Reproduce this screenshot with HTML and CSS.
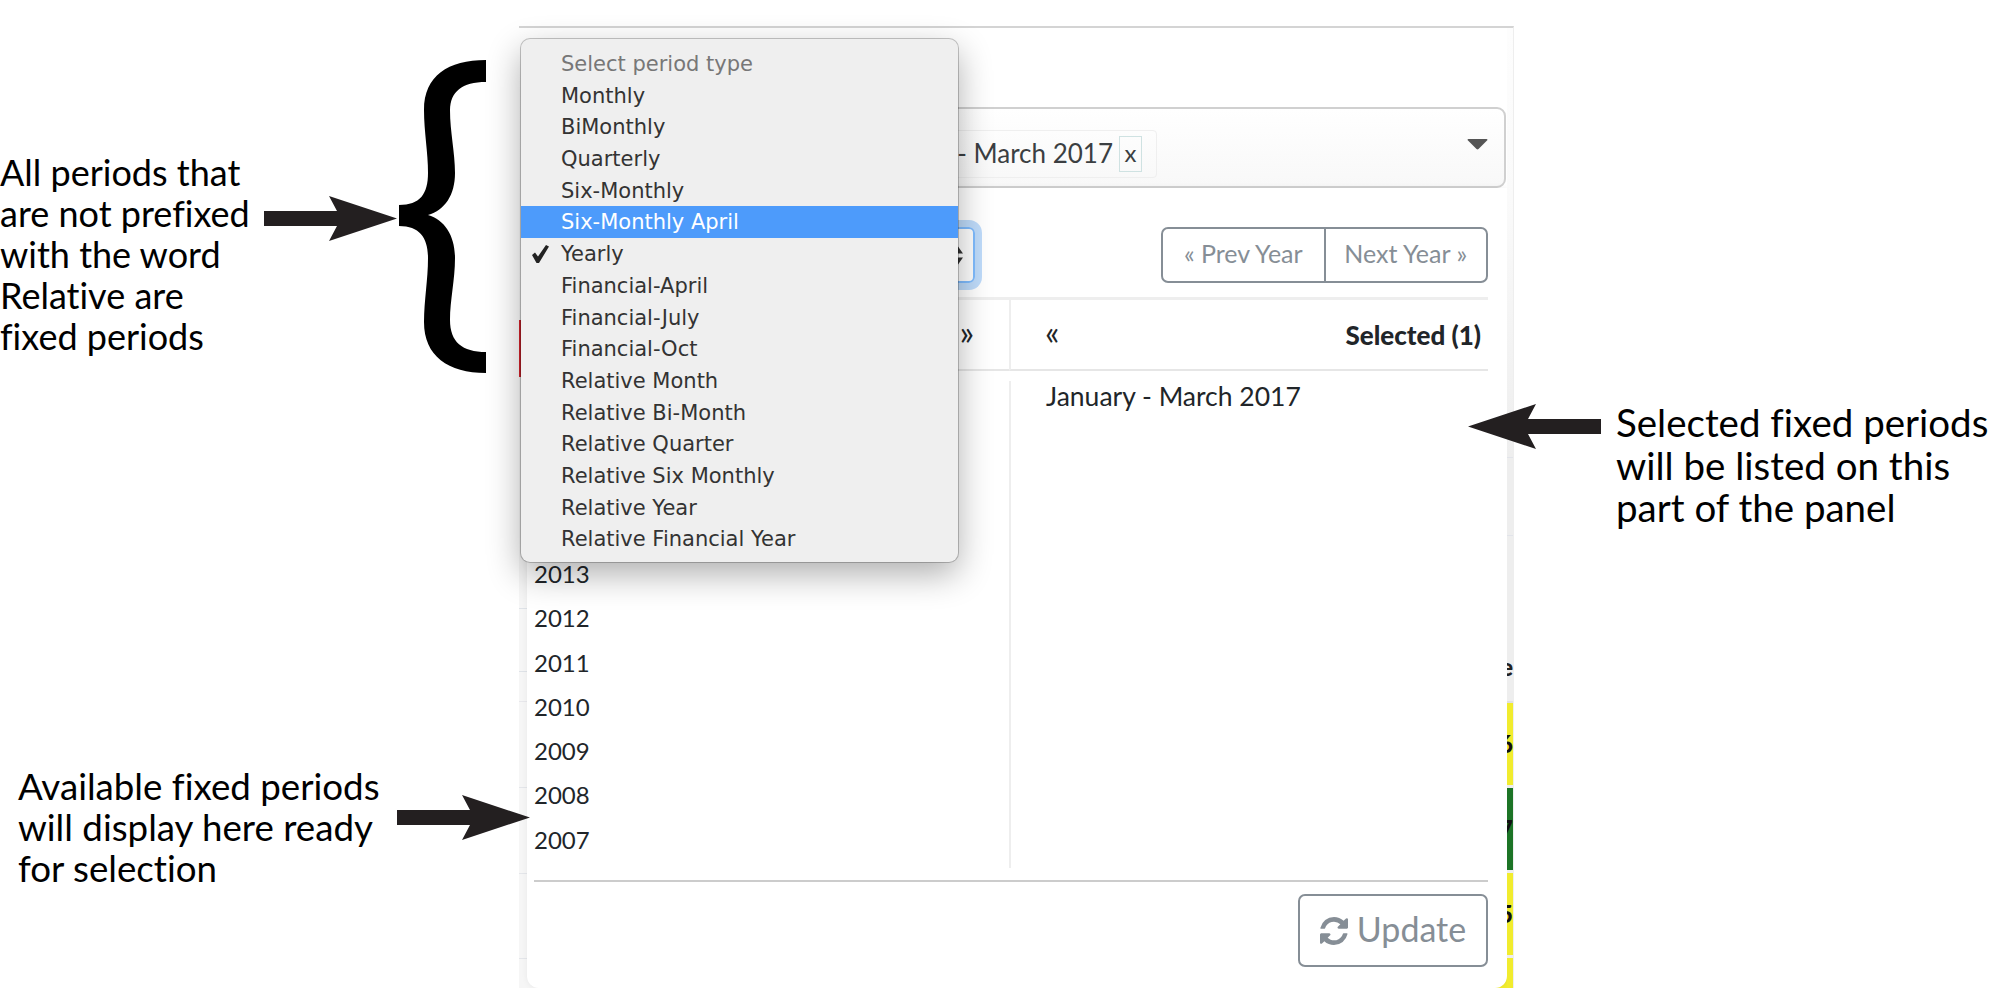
FILE: index.html
```html
<!DOCTYPE html>
<html lang="en">
<head>
<meta charset="utf-8">
<title>Fixed periods</title>
<link rel="stylesheet" href="styles.css">
</head>
<body>
<div class="stage">
  <div class="page">
    <div class="strip-left"></div>
    <div class="main">
      <div class="filter-input">
        <span class="tag"><span class="tag-label">January - March 2017</span><span class="tag-x">x</span></span>
        <svg class="caret" viewBox="0 0 20 12"><path d="M1 1h18a1 1 0 0 1 1 1l-9 9a1.500 1.500 0 0 1-2 0L0 2a1 1 0 0 1 1-1z"/></svg>
      </div>
      <div class="panel">
        <div class="toolbar">
          <div class="select-box">
            <svg class="updown" viewBox="0 0 12 21"><path d="M6 0l6 8.500H0zM6 21l6-8.500H0z"/></svg>
          </div>
          <div class="btn-group">
            <span class="btn-part">« Prev Year</span>
            <span class="btn-part">Next Year »</span>
          </div>
        </div>
        <div class="transfer">
          <div class="head head-left"><span class="chevrons">»</span></div>
          <div class="head head-right"><span class="chevrons">«</span><b>Selected (1)</b></div>
          <div class="body-left">
            <div class="year">2013</div>
            <div class="year">2012</div>
            <div class="year">2011</div>
            <div class="year">2010</div>
            <div class="year">2009</div>
            <div class="year">2008</div>
            <div class="year">2007</div>
          </div>
          <div class="body-right">January - March 2017</div>
        </div>
        <div class="footer">
          <span class="update">
            <svg class="refresh" viewBox="0 0 1536 1536"><path d="M1511 928q0 5-1 7-64 268-268 434.500t-478 166.500q-146 0-282.500-55t-243.500-157l-129 129q-19 19-45 19t-45-19-19-45v-448q0-26 19-45t45-19h448q26 0 45 19t19 45-19 45l-137 137q71 66 161 102t187 36q134 0 250-65t186-179q11-17 53-117 8-23 30-23h192q13 0 22.500 9.500t9.500 22.500zm25-800v448q0 26-19 45t-45 19h-448q-26 0-45-19t-19-45 19-45l138-138q-148-137-349-137-134 0-250 65t-186 179q-11 17-53 117-8 23-30 23h-199q-13 0-22.500-9.500t-9.500-22.500v-7q65-268 270-434.500t480-166.500q146 0 284 55.500t245 156.500l130-129q19-19 45-19t45 19 19 45z"/></svg>
            <span class="update-label">Update</span>
          </span>
        </div>
      </div>
    </div>
    <div class="strip-right">
      <div class="cell cell-blank"></div>
      <div class="cell cell-short"></div>
      <div class="cell cell-grey"></div>
      <div class="cell cell-last">e</div>
      <div class="cell cell-yellow">6</div>
      <div class="cell cell-green">7</div>
      <div class="cell cell-yellow">5</div>
      <div class="cell cell-yellow cell-end"></div>
    </div>
  </div>

  <ul class="menu">
    <li class="menu-item menu-title">Select period type</li>
    <li class="menu-item">Monthly</li>
    <li class="menu-item">BiMonthly</li>
    <li class="menu-item">Quarterly</li>
    <li class="menu-item">Six-Monthly</li>
    <li class="menu-item menu-active">Six-Monthly April</li>
    <li class="menu-item menu-checked">
      <svg class="check" viewBox="0 0 17 18"><path d="M0 10l3-2.500 3 4L14 0l3 1.500L7 18h-2.500z"/></svg>Yearly
    </li>
    <li class="menu-item">Financial-April</li>
    <li class="menu-item">Financial-July</li>
    <li class="menu-item">Financial-Oct</li>
    <li class="menu-item">Relative Month</li>
    <li class="menu-item">Relative Bi-Month</li>
    <li class="menu-item">Relative Quarter</li>
    <li class="menu-item">Relative Six Monthly</li>
    <li class="menu-item">Relative Year</li>
    <li class="menu-item">Relative Financial Year</li>
  </ul>

  <p class="note note-fixed">All periods that<br>are not prefixed<br>with the word<br>Relative are<br>fixed periods</p>
  <p class="note note-available">Available fixed periods<br>will display here ready<br>for selection</p>
  <p class="note note-selected">Selected fixed periods<br>will be listed on this<br>part of the panel</p>

  <svg class="brace" viewBox="399 60 87 313"><path d="M486 60C448 60 424 76 424 110C424 132 428 152 428 173C428 194 420 205 399 205V226C420 226 428 238 428 258C428 280 424 300 424 322C424 356 448 373 486 373V352C462 352 450 342 450 320C450 300 455 280 455 258C455 236 445 220 428 215C445 210 455 195 455 173C455 152 450 132 450 110C450 92 462 82 486 82Z"/></svg>
  <svg class="arrow arrow-one" viewBox="0 0 133 45"><path d="M0 15H73L65 0L133 22.500L65 45L73 30H0Z"/></svg>
  <svg class="arrow arrow-two" viewBox="0 0 133 45"><path d="M0 15H73L65 0L133 22.500L65 45L73 30H0Z"/></svg>
  <svg class="arrow arrow-three" viewBox="0 0 133 45"><path d="M0 15H73L65 0L133 22.500L65 45L73 30H0Z"/></svg>
</div>
</body>
</html>
```

FILE: styles.css
```css
* { box-sizing: border-box; }
html, body { margin: 0; background: #fff; }
body { font-family: "Lato", "Liberation Sans", sans-serif; color: #212529; }

.stage { position: relative; width: 1999px; height: 988px; overflow: hidden; }

.page {
  margin: 26px 0 0 519px;
  width: 995px;
  height: 962px;
  border-top: 2px solid #d4d4d4;
  border-right: 1px solid #eee;
  display: grid;
  grid-template-columns: 8px 980px 6px;
}

.strip-left {
  background-color: #f6f6f6;
  background-image:
    linear-gradient(#d3232b, #d3232b),
    linear-gradient(#dfe3e8, #dfe3e8),
    linear-gradient(#dfe3e8, #dfe3e8),
    linear-gradient(#e8e8ec, #e8e8ec),
    linear-gradient(#e4e6ea, #e4e6ea),
    linear-gradient(#e4e6ea, #e4e6ea),
    linear-gradient(#e4e6ea, #e4e6ea),
    linear-gradient(#fff, #f6f6f6);
  background-repeat: no-repeat;
  background-size: 2px 57px, 8px 1px, 8px 1px, 8px 1px, 8px 1px, 8px 1px, 8px 1px, 8px 300px;
  background-position: 0 292px, 0 580px, 0 643px, 0 673px, 0 759px, 0 845px, 0 930px, 0 0;
}

.main {
  display: flex;
  flex-direction: column;
  padding-top: 79px;
  min-height: 0;
  background-image: linear-gradient(#f6f6f6, #f6f6f6), linear-gradient(#f1ec2e, #f1ec2e);
  background-repeat: no-repeat;
  background-size: 14px 14px;
  background-position: left bottom, right bottom;
}

.filter-input {
  flex: none;
  height: 81px;
  margin-right: 1px;
  padding: 21px 16px 0 0;
  display: flex;
  justify-content: flex-end;
  align-items: flex-start;
  border: 2px solid #d0d0d0;
  border-radius: 9px;
  background: linear-gradient(#fff, #f8f8f8);
}
.tag {
  display: flex;
  align-items: center;
  height: 48px;
  padding: 0 14px 0 10px;
  border: 1px solid #efefef;
  border-radius: 4px;
  font-size: 26px;
  color: #3b3f42;
  white-space: nowrap;
}
.tag-label { padding-bottom: 3px; }
.tag-x {
  margin-left: 6px;
  width: 23px;
  height: 36px;
  border: 1px solid #cfe2e2;
  text-align: center;
  font-size: 24px;
  line-height: 32px;
}
.caret { width: 21px; height: 12px; margin: 8px 0 0 310px; fill: #555; flex: none; }

.panel {
  flex: 1;
  min-height: 0;
  padding: 0 19px 0 7px;
  background: #fff;
  border-radius: 0 0 12px 12px;
  display: flex;
  flex-direction: column;
  box-shadow: 0 0 6px rgba(0, 0, 0, 0.06);
}
.toolbar {
  flex: none;
  height: 109px;
  padding-top: 39px;
  display: flex;
  justify-content: space-between;
  align-items: flex-start;
}
.select-box {
  width: 441px;
  height: 56px;
  padding-right: 10px;
  display: flex;
  justify-content: flex-end;
  align-items: center;
  border: 2px solid #80bdff;
  border-radius: 6px;
  box-shadow: 0 0 0 7px #bfdcfb;
}
.updown { width: 12px; height: 21px; fill: #333; }
.btn-group {
  width: 327px;
  height: 56px;
  display: flex;
  border: 2px solid #868e96;
  border-radius: 7px;
  color: #868e96;
  font-size: 25px;
}
.btn-part { flex: 1; display: flex; align-items: center; justify-content: center; padding-bottom: 5px; white-space: nowrap; }
.btn-part + .btn-part { border-left: 2px solid #868e96; }

.transfer {
  flex: 1;
  min-height: 0;
  display: grid;
  grid-template-columns: 475px 1fr;
  grid-template-rows: 71px 1fr;
  border-top: 3px solid #eee;
}
.head {
  display: flex;
  align-items: center;
  border-bottom: 2px solid #e6e6e6;
  font-size: 24px;
}
.chevrons { font-size: 34px; line-height: 1; padding-bottom: 6px; }
.head-left { justify-content: flex-end; padding-right: 35px; }
.head-right {
  justify-content: space-between;
  padding: 0 7px 0 34px;
  border-left: 2px solid #eee;
}
.head-right b { font-size: 26px; font-weight: 900; }
.body-left { padding-top: 181px; font-size: 24px; }
.year { height: 44.300px; line-height: 44.300px; }
.body-right {
  margin: 10px 0 12px;
  padding-left: 35px;
  border-left: 2px solid #eee;
  font-size: 26.500px;
  line-height: 30px;
}

.footer {
  flex: none;
  height: 108px;
  padding-top: 12px;
  display: flex;
  justify-content: flex-end;
  align-items: flex-start;
  border-top: 2px solid #ccc;
}
.update {
  width: 190px;
  height: 73px;
  display: flex;
  align-items: center;
  justify-content: center;
  gap: 9px;
  border: 2px solid #868e96;
  border-radius: 7px;
  color: #868e96;
  font-size: 34px;
}
.update-label { padding-bottom: 4px; }
.refresh { width: 28px; height: 28px; fill: #868e96; }

.strip-right { display: flex; flex-direction: column; min-height: 0; overflow: hidden; }
.cell {
  overflow: hidden;
  white-space: nowrap;
  font-size: 24px;
  font-weight: 900;
  line-height: 1;
  color: #111;
  border-bottom: 3px solid #eee;
  display: flex;
  align-items: center;
  justify-content: flex-end;
}
.cell-blank { height: 430px; background: linear-gradient(#fdfdfd, #fafafa 40%, #eee); border-bottom: 1px solid #e2e4ea; }
.cell-short { height: 78px; background: #eee; border-bottom: 1px solid #e2e4ea; }
.cell-grey { height: 85px; background: #eee; border-bottom: 0; }
.cell-last { height: 82px; padding-top: 12px; background: #eee; color: #222; border-bottom: 2px solid #e0e0e0; }
.cell-yellow { height: 85px; background: #f1ec2e; }
.cell-green { height: 85px; background: #1c7426; }
.cell-end { flex: 1; border-bottom: 0; }

.menu {
  position: absolute;
  left: 521px;
  top: 39px;
  width: 437px;
  height: 523px;
  margin: 0;
  padding: 9px 0 0;
  list-style: none;
  background: #efefef;
  border-radius: 9px;
  box-shadow: 0 0 0 1px rgba(0, 0, 0, 0.22), 0 12px 34px rgba(0, 0, 0, 0.32);
  font-family: "DejaVu Sans", sans-serif;
  font-size: 21px;
  color: #333;
}
.menu-item {
  position: relative;
  height: 31.700px;
  line-height: 33.700px;
  padding-left: 40px;
  white-space: nowrap;
}
.menu-title { color: #777; }
.menu-active { background: #4d9bfb; color: #fff; }
.check { position: absolute; left: 11px; top: 7px; width: 17px; height: 18px; fill: #222; }

.note {
  position: absolute;
  margin: 0;
  font-family: "Lato", sans-serif;
  font-variant-ligatures: none;
  font-size: 36px;
  line-height: 41px;
  color: #000;
  white-space: nowrap;
}
.note-fixed { left: 0; top: 152px; }
.note-available { left: 18px; top: 766px; font-size: 36.700px; }
.note-selected { left: 1616px; top: 401px; font-size: 38.500px; line-height: 42.500px; }

.brace { position: absolute; left: 399px; top: 60px; width: 87px; height: 313px; fill: #000; }
.arrow { position: absolute; width: 133px; height: 45px; fill: #231f20; }
.arrow-one { left: 264px; top: 196px; }
.arrow-two { left: 397px; top: 795px; }
.arrow-three { left: 1466px; top: 404px; width: 137px; transform: scaleX(-1); }
```
